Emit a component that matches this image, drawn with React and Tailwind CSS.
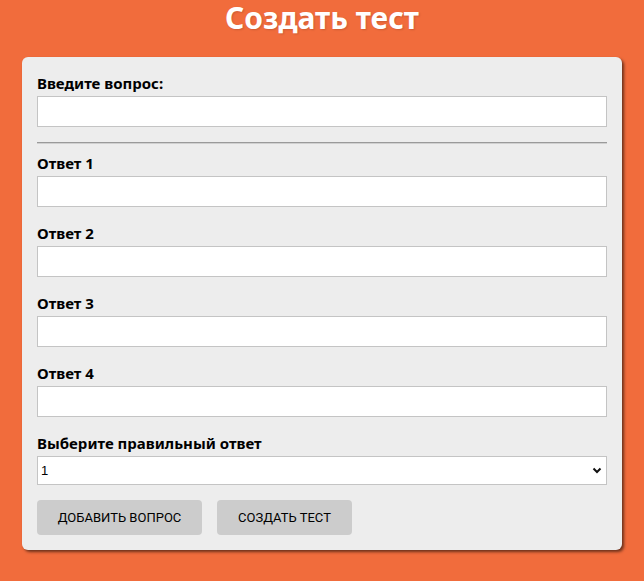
import React, { useState } from 'react';

const Field = ({ label, value, onChange }) => (
  <div className="mb-[16px]">
    <label className="block mb-[3px] text-[15px] font-bold leading-[20px] text-black">{label}</label>
    <input
      type="text"
      value={value}
      onChange={onChange}
      className="block w-full h-[31px] bg-white border border-[#c4c4c4] px-2 text-sm focus:outline-none"
    />
  </div>
);

const App = () => {
  const [question, setQuestion] = useState('');
  const [answers, setAnswers] = useState(['', '', '', '']);
  const [correct, setCorrect] = useState('1');

  const setAnswer = (i, v) => {
    const next = [...answers];
    next[i] = v;
    setAnswers(next);
  };

  return (
    <div
      className="min-h-[581px] bg-[#f16c3c] pb-[30px]"
      style={{ fontFamily: '"Noto Sans", "Open Sans", sans-serif' }}
    >
      <h1 className="text-center text-white text-[30px] font-bold leading-[34px] pt-[1px] [text-shadow:1px_1px_2px_rgba(0,0,0,0.15)]">
        Создать тест
      </h1>
      <div className="mx-[22px] mt-[22px] w-[600px] bg-[#ededed] rounded-[6px] shadow-[2px_2px_3px_rgba(0,0,0,0.55)] px-[15px] pt-[16px] pb-[15px]">
        <div className="mb-[15px]">
          <label className="block mb-[3px] text-[15px] font-bold leading-[20px] text-black">Введите вопрос:</label>
          <input
            type="text"
            value={question}
            onChange={(e) => setQuestion(e.target.value)}
            className="block w-full h-[31px] bg-white border border-[#c4c4c4] px-2 text-sm focus:outline-none"
          />
        </div>
        <hr className="border-0 border-t border-b border-t-[#9a9a9a] border-b-[#d0d0d0] mb-[9px]" />
        {answers.map((a, i) => (
          <Field key={i} label={`Ответ ${i + 1}`} value={a} onChange={(e) => setAnswer(i, e.target.value)} />
        ))}
        <div>
          <label className="block mb-[3px] text-[15px] font-bold leading-[20px] text-black">Выберите правильный ответ</label>
          <div className="relative">
            <select
              value={correct}
              onChange={(e) => setCorrect(e.target.value)}
              className="block w-full h-[29px] appearance-none bg-white border border-[#c4c4c4] pl-[3px] text-[13px] text-black focus:outline-none"
              style={{ fontFamily: '"Liberation Sans", Arial, sans-serif' }}
            >
              <option>1</option>
              <option>2</option>
              <option>3</option>
              <option>4</option>
            </select>
            <svg className="absolute right-[5px] top-[11px] pointer-events-none" width="10" height="8" viewBox="0 0 10 8">
              <path d="M1.5 1.5 L5 5 L8.5 1.5" fill="none" stroke="#111" strokeWidth="2" />
            </svg>
          </div>
        </div>
        <div className="flex gap-[15px] mt-[15px]">
          <button
            className="h-[35px] w-[165px] bg-[#cccccc] rounded-[4px] text-[13px] text-black uppercase"
            style={{ fontFamily: 'Roboto, sans-serif' }}
          >
            Добавить вопрос
          </button>
          <button
            className="h-[35px] w-[135px] bg-[#cccccc] rounded-[4px] text-[13px] text-black uppercase"
            style={{ fontFamily: 'Roboto, sans-serif' }}
          >
            Создать тест
          </button>
        </div>
      </div>
    </div>
  );
};

export default App;
